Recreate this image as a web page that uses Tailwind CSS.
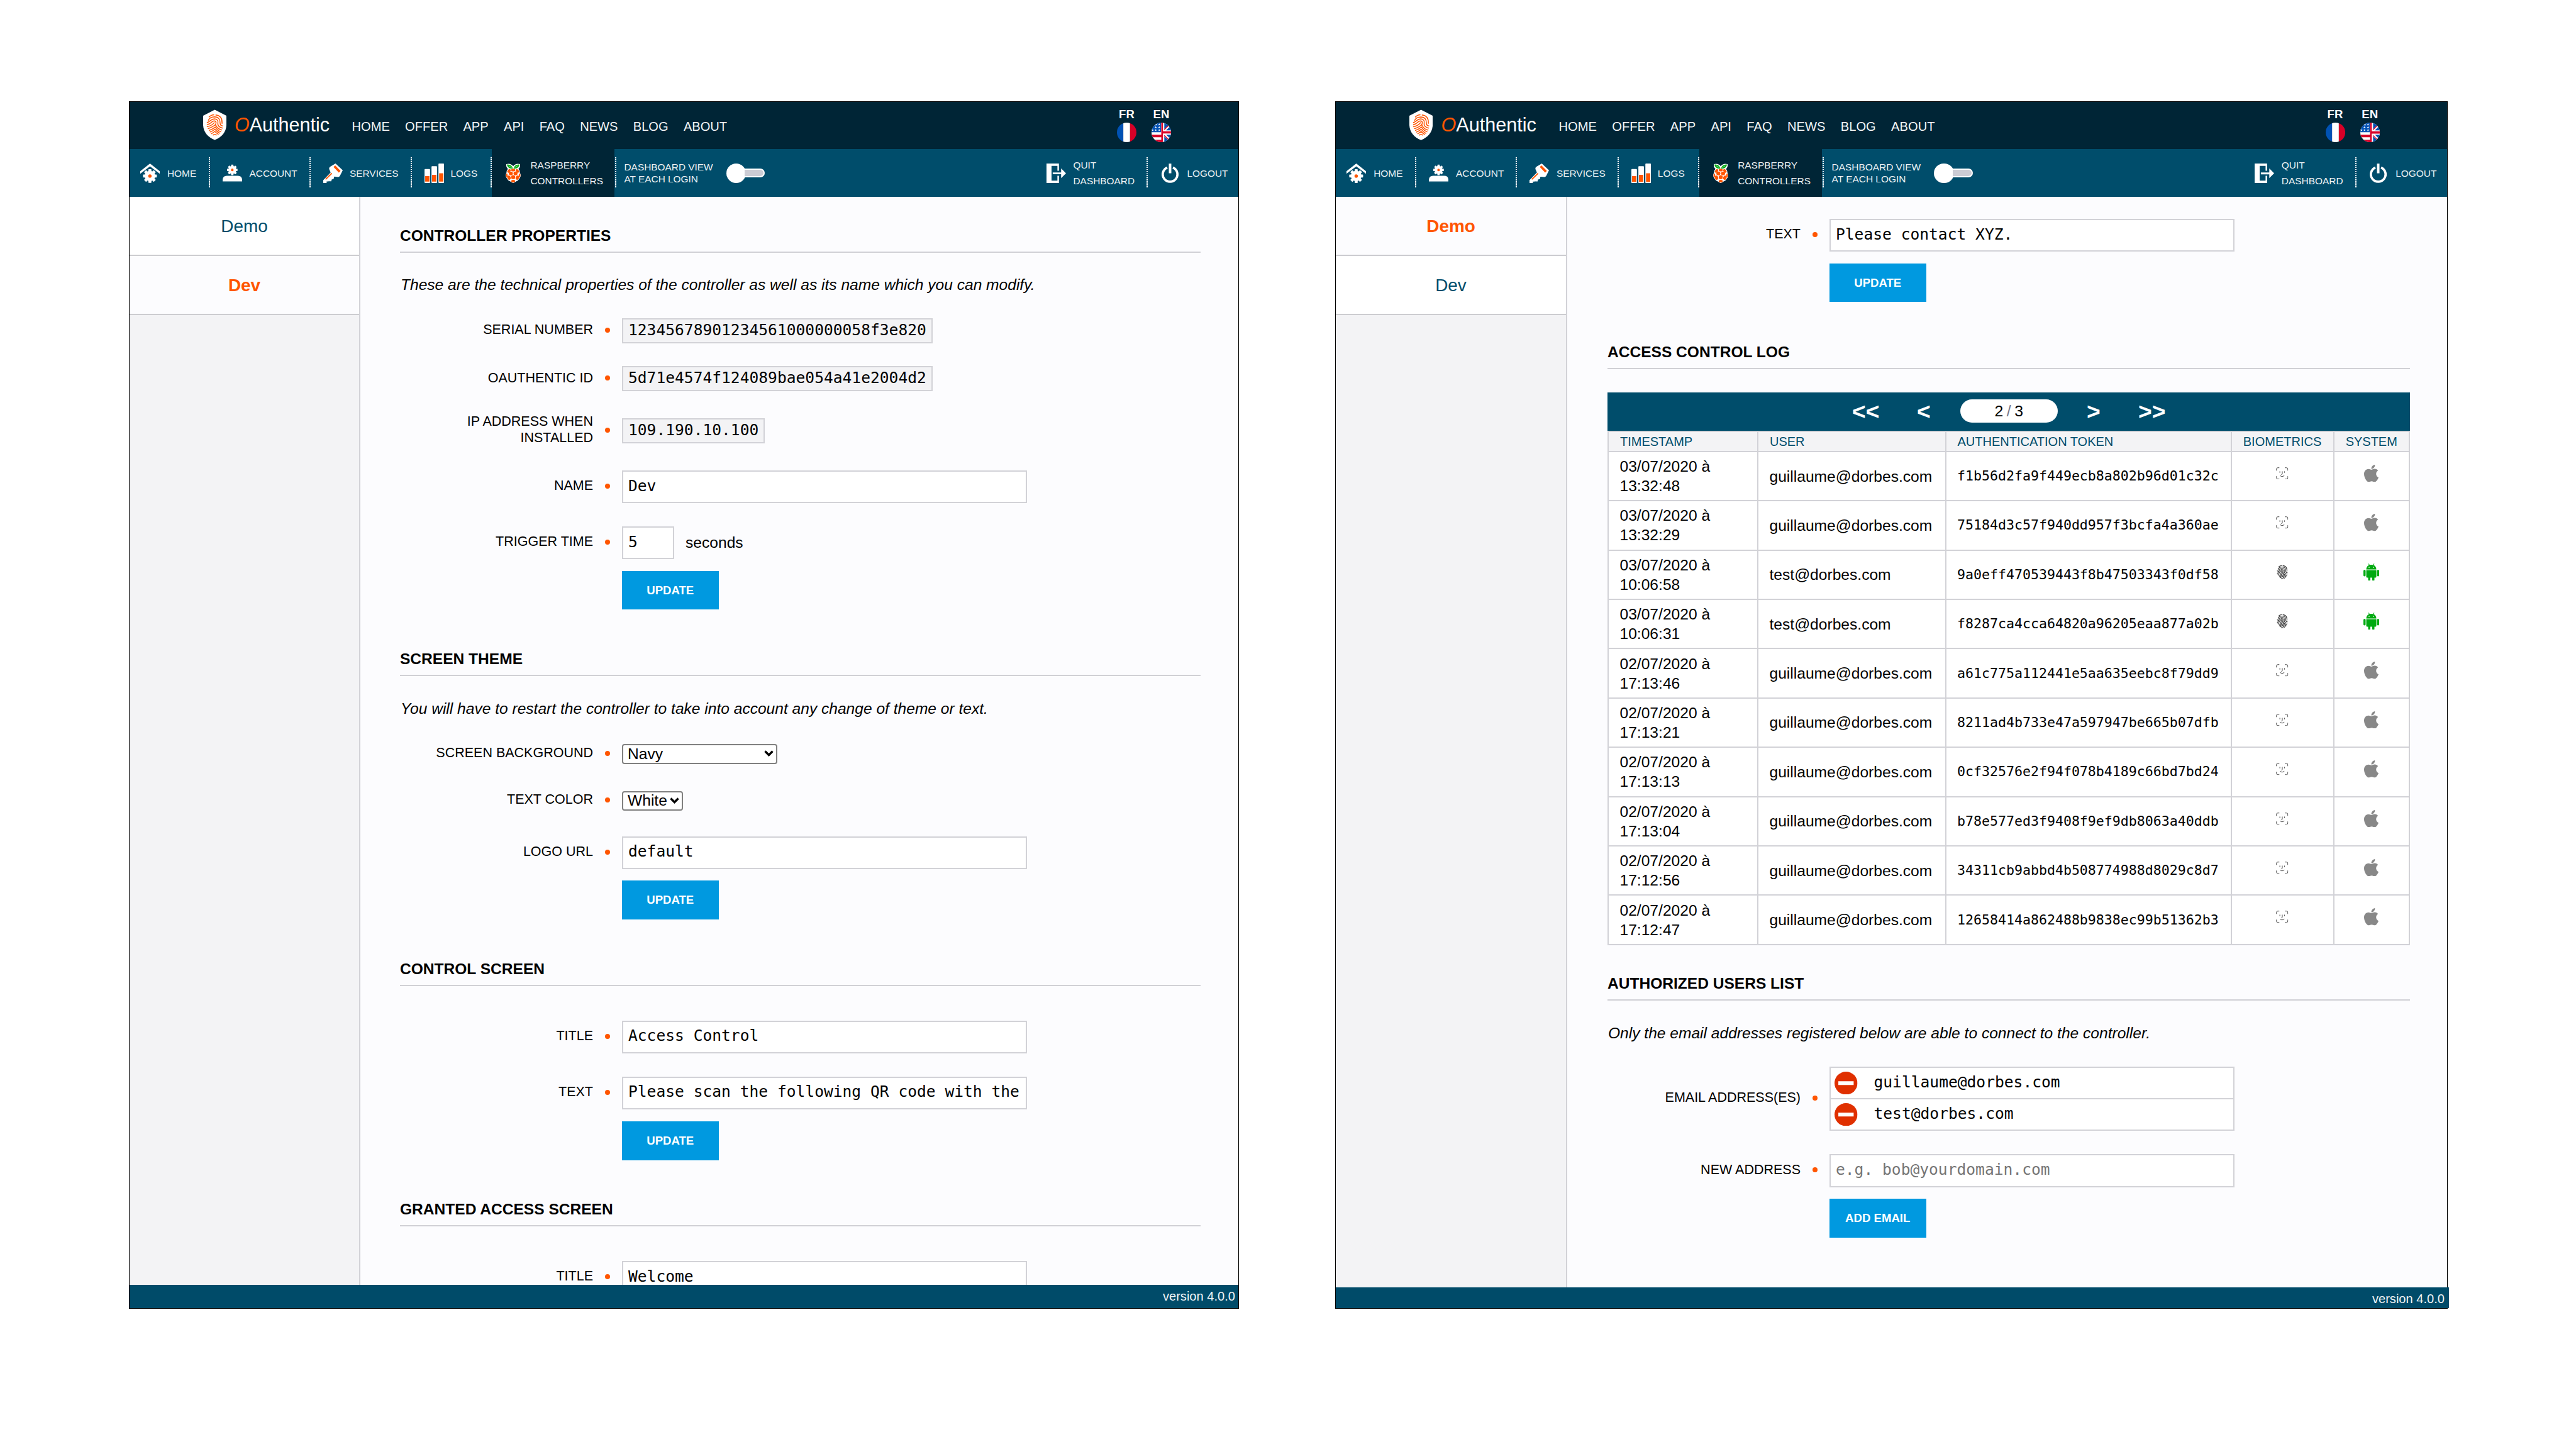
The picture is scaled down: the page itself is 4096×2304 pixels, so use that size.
<!DOCTYPE html>
<html lang="en">
<head>
<meta charset="utf-8">
<title>OAuthentic – Raspberry controllers</title>
<script src="https://cdn.jsdelivr.net/npm/@tailwindcss/browser@4"></script>
</head>
<body class="bg-white w-[4096px] h-[2304px] overflow-hidden font-['Liberation_Sans',Arial,sans-serif] text-black">

<svg width="0" height="0" class="absolute">
  <defs>
    <g id="prints" fill="none" stroke-linecap="butt">
      <path d="M34 45Q46 31 66 30"/>
      <path d="M74 31C104 34 114 55 113 78V84"/>
      <path d="M30 65C38 50 50 43 68 43C92 44 102 58 101 78C101 90 106 96 118 97"/>
      <path d="M22 77C44 72 44 55 68 55C86 56 91 68 88 81C85 96 100 108 117 110"/>
      <path d="M22 90C52 84 48 67 66 67C82 68 78 84 71 92"/>
      <path d="M22 102C46 98 58 88 68 76"/>
      <path d="M28 113C48 109 62 98 74 90C80 104 92 118 113 122"/>
      <path d="M34 124C50 120 62 112 72 104C80 116 92 128 107 133"/>
      <path d="M40 134C52 130 62 124 70 117C78 127 88 135 100 142"/>
      <path d="M48 144C56 140 62 136 70 130C76 136 82 142 92 148"/>
      <path d="M58 153C63 147 76 147 81 153"/>
    </g>
    <g id="gear">
      <circle r="31"/>
      <g id="tooth"><rect x="-9" y="-41" width="18" height="82" rx="3"/></g>
      <use href="#tooth" transform="rotate(45)"/>
      <use href="#tooth" transform="rotate(90)"/>
      <use href="#tooth" transform="rotate(135)"/>
      <circle r="10" fill="#f50"/>
    </g>
  </defs>
  <symbol id="shield" viewBox="0 0 139 181">
    <path fill="#fff" d="M69.500 0L139 36V92C137 133 112 164 69.500 181C27 164 2 133 0 92V36Z"/>
    <use href="#prints" stroke="#f50" stroke-width="5.600"/>
  </symbol>
  <symbol id="finger" viewBox="18 24 104 134"><use href="#prints" stroke="#333" stroke-width="6.400"/></symbol>
  <symbol id="i-home" viewBox="0 0 116 116">
    <path fill="#fff" d="M58 0L116 46V61L58 17L0 61V46Z"/>
    <use href="#gear" fill="#fff" transform="translate(57.500 74.500)"/>
  </symbol>
  <symbol id="i-account" viewBox="0 0 116 116">
    <use href="#gear" fill="#fff" transform="translate(57.500 38) scale(.76)"/>
    <path fill="#fff" d="M0 106V96Q2 73 25 73H91Q114 73 116 96V106Z"/>
    <path fill="#8fb0bf" d="M0 106H116V109H0Z"/>
  </symbol>
  <symbol id="i-key" viewBox="0 0 116 116">
    <path fill="#fff" d="M73 0L116 40L99 74Q95 80 88 80L67 78L64 80L62 92L50 95L48 106H35L32 104V107H20V116H0V99L44 53L35 33Q34 25 40 20Z"/>
    <path stroke="#f50" stroke-width="14" d="M66 16L98 49"/>
    <path stroke="#f50" stroke-width="7" stroke-linecap="round" d="M16 92L49 60"/>
  </symbol>
  <symbol id="i-logs" viewBox="0 0 116 116">
    <g fill="#fff"><rect y="33" width="33" height="83" rx="4"/><rect x="41.500" y="16" width="33" height="100" rx="4"/><rect x="83" width="33" height="116" rx="4"/></g>
    <path fill="#f50" d="M4 75H29V108H4ZM45 67H70V108H45ZM87 58H112V108H87Z"/>
  </symbol>
  <symbol id="i-rasp" viewBox="0 0 90 116">
    <path fill="#fff" d="M4 4Q30 -3 45 16Q60 -3 86 4Q88 24 76 32Q86 42 85 55Q96 72 83 88Q76 102 64 106Q54 114 45 116Q36 114 26 106Q14 102 7 88Q-6 72 5 55Q4 42 14 32Q2 24 4 4Z"/>
    <path fill="#0a1" d="M7 6Q34 3 43 29Q16 34 7 6ZM83 6Q56 3 47 29Q74 34 83 6Z"/>
    <path stroke="#fff" stroke-width="2" fill="none" d="M18 13L36 24M72 13L54 24"/>
    <g fill="#f50">
      <ellipse cx="45" cy="39" rx="12" ry="8"/>
      <ellipse cx="20" cy="44" rx="8" ry="12" transform="rotate(40 20 44)"/>
      <ellipse cx="70" cy="44" rx="8" ry="12" transform="rotate(-40 70 44)"/>
      <ellipse cx="31" cy="59" rx="12" ry="11"/><ellipse cx="59" cy="59" rx="12" ry="11"/>
      <ellipse cx="7" cy="70" rx="5" ry="11"/><ellipse cx="83" cy="70" rx="5" ry="11"/>
      <circle cx="45" cy="81" r="12"/>
      <ellipse cx="20" cy="84" rx="10" ry="13" transform="rotate(-20 20 84)"/>
      <ellipse cx="70" cy="84" rx="10" ry="13" transform="rotate(20 70 84)"/>
      <ellipse cx="45" cy="105" rx="12" ry="7.500"/>
    </g>
  </symbol>
  <symbol id="i-quit" viewBox="0 0 116 116">
    <path fill="#fff" d="M0 0H74V43H65V14H30V102H65V73H74V116H0Z"/>
    <path fill="#fff" d="M37 53H87V29L116 58L87 87V64H37Z"/>
  </symbol>
  <symbol id="i-power" viewBox="0 0 102 116">
    <path fill="none" stroke="#fff" stroke-width="14" d="M34 24A44 44 0 1 0 68 24"/>
    <path fill="#fff" d="M43.500 0H58.500V58H43.500Z"/>
  </symbol>
  <symbol id="i-fr" viewBox="0 0 116 116">
    <clipPath id="disc"><circle cx="58" cy="58" r="58"/></clipPath>
    <g clip-path="url(#disc)"><path fill="#0052b4" d="M0 0H39V116H0Z"/><path fill="#fff" d="M38 0H78V116H38Z"/><path fill="#d80027" d="M78 0H116V116H78Z"/></g>
  </symbol>
  <symbol id="i-en" viewBox="0 0 116 116">
    <g clip-path="url(#disc)">
      <path fill="#fff" d="M0 0H116V116H0Z"/>
      <path fill="#0052b4" d="M0 0H57V57H0ZM76 0H116L76 38ZM116 16V46H87ZM76 116V80L112 116ZM116 100V72H87Z"/>
      <path fill="#d80027" d="M0 72H58V87H0ZM0 102H58V116H0ZM58 0H68V116H58ZM58 51H116V65H58Z"/>
      <path stroke="#d80027" stroke-width="5" d="M76 42L108 10M76 76L108 108"/>
      <path fill="#fff" d="M46 4l2 5h5l-4 3 2 5-5-3-5 3 2-5-4-3h5zM46 21l2 5h5l-4 3 2 5-5-3-5 3 2-5-4-3h5zM46 38l2 5h5l-4 3 2 5-5-3-5 3 2-5-4-3h5zM25 21l2 5h5l-4 3 2 5-5-3-5 3 2-5-4-3h5zM25 38l2 5h5l-4 3 2 5-5-3-5 3 2-5-4-3h5zM28 6l2 4h5l-4 3 2 4-5-2-5 2 2-4-4-3h5zM7 38l2 5h5l-4 3 2 5-5-3-5 3 2-5-4-3h5z"/>
    </g>
  </symbol>
  <symbol id="i-face" viewBox="0 0 40 40">
    <g fill="none" stroke="#444" stroke-width="2" stroke-linecap="round">
      <path d="M1.500 10V6Q1.500 1.500 6 1.500H10M30 1.500H34Q38.500 1.500 38.500 6V10M38.500 30V34Q38.500 38.500 34 38.500H30M10 38.500H6Q1.500 38.500 1.500 34V30"/>
      <path d="M12.500 14V17M27.500 14V17M20.500 14V21Q20.500 23.500 18 23.500M13.500 28Q20 33.500 26.500 28"/>
    </g>
  </symbol>
  <symbol id="i-apple" viewBox="4 32 376 448">
    <path fill="#888" d="M318.700 268.700c-.2-36.700 16.400-64.400 50-84.800-18.800-26.900-47.200-41.700-84.700-44.600-35.500-2.800-74.300 20.700-88.500 20.700-15 0-49.400-19.700-76.400-19.700C63.300 141.200 4 184.800 4 273.500q0 39.300 14.400 81.200c12.800 36.700 59 126.700 107.200 125.200 25.200-.6 43-17.900 75.800-17.900 31.800 0 48.300 17.900 76.400 17.900 48.600-.7 90.400-82.500 102.600-119.300-65.200-30.700-61.700-90-61.700-91.900zm-56.600-164.200c27.300-32.400 24.800-61.900 24-72.500-24.100 1.400-52 16.400-67.900 34.900-17.500 19.800-27.800 44.300-25.600 71.900 26.100 2 49.900-11.400 69.500-34.300z"/>
  </symbol>
  <symbol id="i-android" viewBox="0 0 50 55">
    <g fill="#0a1">
      <path d="M9 19C9 12 13 7 18 5L15 1L16.500 0L20 4.500Q25 3 30 4.500L33.500 0L35 1L32 5C37 7 41 12 41 19Z"/>
      <path d="M9 21H41V42Q41 45 38 45H35V52Q35 55 32 55Q28 55 28 52V45H22V52Q22 55 18 55Q15 55 15 52V45H12Q9 45 9 42Z"/>
      <rect y="20" width="7" height="21" rx="3.500"/><rect x="43" y="20" width="7" height="21" rx="3.500"/>
    </g>
    <circle cx="18" cy="12" r="1.700" fill="#fff"/><circle cx="32" cy="12" r="1.700" fill="#fff"/>
  </symbol>
  <symbol id="i-remove" viewBox="0 0 36 36"><circle cx="18" cy="18" r="18" fill="#e03000"/><path fill="#fff" d="M6 15H30V21H6Z"/></symbol>
  <symbol id="i-caret" viewBox="0 0 15 10"><path d="M1.500 1.500L7.500 7.500L13.500 1.500" fill="none" stroke="#000" stroke-width="3.400"/></symbol>
</svg>

<div class="flex gap-[153px] pl-[205px] pt-[161px]">

  <!-- Controller "Dev" -->
  <section class="w-[1765px] h-[1920px] shrink-0 border border-black flex flex-col">
    <header data-header></header>
    <div class="flex h-[1730px] overflow-hidden bg-[#fcfcfe]">
      <aside class="w-[367px] shrink-0 border-r-2 border-[#d2d2d7] bg-[#f3f3f5] text-[27.9px] text-center">
        <div class="h-[94px] bg-white border-b-2 border-[#ccccd0] text-[#004d6b] leading-[93px]">Demo</div>
        <div class="h-[94px] bg-[#fcfcfe] border-b-2 border-[#ccccd0] text-[#f50] font-bold leading-[93px]">Dev</div>
      </aside>
      <main data-form="dev" class="flex-1 pl-[63px] pr-[60px] pt-[46.500px]"></main>
    </div>
    <footer class="flex-1 bg-[#004b69] text-[#f0f4f6] text-[20.1px] flex items-center justify-end pr-[5px]">version 4.0.0</footer>
  </section>

  <!-- Controller "Demo" -->
  <section class="w-[1769px] h-[1920px] shrink-0 border border-black flex flex-col">
    <header data-header class="[zoom:1.0027]"></header>
    <div class="flex h-[1734px] overflow-hidden bg-[#fcfcfe]">
      <aside class="w-[368px] shrink-0 border-r-2 border-[#d2d2d7] bg-[#f3f3f5] text-[27.9px] text-center">
        <div class="h-[94px] bg-[#fcfcfe] border-b-2 border-[#ccccd0] text-[#f50] font-bold leading-[93px]">Demo</div>
        <div class="h-[94px] bg-white border-b-2 border-[#ccccd0] text-[#004d6b] leading-[93px]">Dev</div>
      </aside>
      <main data-form="demo" class="flex-1 pl-[64px] pr-[59px] pt-[35px]"></main>
    </div>
    <footer class="flex-1 w-[calc(100%+3px)] bg-[#004b69] text-[#f0f4f6] text-[20.1px] flex items-center justify-end pt-[2px] pr-[7px]">version 4.0.0</footer>
  </section>
</div>

<script>
const icon = (id, cls) => `<svg class="shrink-0 ${cls}"><use href="#${id}"/></svg>`;
const divider = `<span class="w-[2px] h-[50px] shrink-0 bg-[repeating-linear-gradient(to_bottom,#fff_0_1.7px,transparent_1.7px_3.1px)]"></span>`;

const header = `
<div class="h-[75px] bg-[#002536] flex items-center">
  ${icon('shield', 'w-[37px] h-[49px] ml-[117px] mt-[-2px]')}
  <span class="ml-[13px] w-[172px] text-[30.5px] text-white mt-[-1px]"><i class="text-[#f50]">O</i>Authentic</span>
  <nav class="ml-[14.500px] flex gap-[24.300px] text-[20.1px] text-[#f2f5f6] pt-[3px]">
    ${['HOME','OFFER','APP','API','FAQ','NEWS','BLOG','ABOUT'].map(t => `<a>${t}</a>`).join('')}
  </nav>
  <div class="ml-auto mr-[107px] flex gap-[24px] text-white text-[18.6px] font-bold leading-[20px] mb-[1px]">
    <div class="w-[31px] flex flex-col items-center gap-[3px]"><span>FR</span>${icon('i-fr', 'size-[31px]')}</div>
    <div class="w-[31px] flex flex-col items-center gap-[3px]"><span>EN</span>${icon('i-en', 'size-[31px]')}</div>
  </div>
</div>
<div class="h-[76px] bg-[#004d6b] flex items-center text-[15.4px] text-[#eef3f5] whitespace-nowrap">
  <div class="w-[126px] pl-[17px] flex items-center gap-[12px]">${icon('i-home', 'size-[31px]')}<span class="pt-[1px]">HOME</span></div>${divider}
  <div class="w-[157.500px] pl-[19.500px] flex items-center gap-[12px]">${icon('i-account', 'size-[31px]')}<span class="pt-[1px]">ACCOUNT</span></div>${divider}
  <div class="w-[159.500px] pl-[20px] flex items-center gap-[11.500px]">${icon('i-key', 'size-[31px]')}<span class="pt-[1px]">SERVICES</span></div>${divider}
  <div class="w-[125px] pl-[19.500px] flex items-center gap-[11px]">${icon('i-logs', 'size-[31px]')}<span class="pt-[1px]">LOGS</span></div>${divider}
  <div class="w-[195px] h-full bg-[#002536] pl-[22px] flex items-center gap-[15.500px]">${icon('i-rasp', 'w-[24px] h-[31px]')}<span class="leading-[24.800px] pt-[1px]">RASPBERRY<br>CONTROLLERS</span></div><span class="w-[1px]"></span>${divider}
  <span class="w-[162px] pl-[12.500px] leading-[18.600px] pt-[1px]">DASHBOARD VIEW<br>AT EACH LOGIN</span>
  <span class="ml-[13px] flex items-center"><span class="size-[31px] rounded-full bg-white"></span><span class="w-[34px] h-[14px] -ml-[4px] rounded-r-full bg-[#ccccd4] border-2 border-white"></span></span>
  <div class="ml-auto flex items-center gap-[12px] w-[159.500px]">${icon('i-quit', 'size-[31px]')}<span class="leading-[24.800px] pt-[1px]">QUIT<br>DASHBOARD</span></div>${divider}
  <div class="w-[144px] pl-[21.500px] flex items-center gap-[14px]">${icon('i-power', 'w-[27px] h-[31px]')}<span class="pt-[1px]">LOGOUT</span></div>
</div>`;
document.querySelectorAll('[data-header]').forEach(h => h.innerHTML = header);

const heading = (t, mt) => `<h2 class="h-[42px] border-b-2 border-[#d0d0d5] text-[24.55px] leading-[30px] font-bold ${mt}">${t}</h2>`;
const note = (t, mt) => `<p class="italic text-[24.57px] leading-[30px] whitespace-nowrap pl-[1px] ${mt}">${t}</p>`;
const row = (label, cls, field) => `<div class="flex items-center ${cls}"><label class="w-[307px] shrink-0 text-right text-[21.5px] leading-[25.800px] pb-[2px]">${label}</label><span class="w-[46px] shrink-0 flex justify-center pb-[2px]"><i class="size-[8px] rounded-full bg-[#f50]"></i></span>${field}</div>`;
const mono = "font-['DejaVu_Sans_Mono',monospace] text-[24.6px] whitespace-pre flex items-center h-full px-[8px] pb-[2px] border-2 border-[#d2d2d7]";
const fixed = t => `<span class="${mono} bg-[#f3f3f5]">${t}</span>`;
const input = (t, w = 'w-[643.500px]', c = 'text-black') => `<span class="${mono} bg-white ${w} ${c}">${t}</span>`;
const select = (t, w) => `<span class="h-full ${w} bg-white border-2 border-[#808080] rounded-[4px] pl-[7px] pr-[4px] flex items-center justify-between text-[24.6px] leading-[28px]">${t}${icon('i-caret', 'w-[15px] h-[10px] mb-[1px]')}</span>`;
const button = (t, cls) => `<button class="block ml-[353px] w-[153.500px] bg-[#0099e0] text-white text-[18.6px] font-bold ${cls}">${t}</button>`;

document.querySelector('[data-form=dev]').innerHTML =
  heading('CONTROLLER PROPERTIES', '') +
  note('These are the technical properties of the controller as well as its name which you can modify.', 'mt-[36.400px]') +
  row('SERIAL NUMBER', 'mt-[38.100px] h-[40px]', fixed('12345678901234561000000058f3e820')) +
  row('OAUTHENTIC ID', 'mt-[36.500px] h-[40px]', fixed('5d71e4574f124089bae054a41e2004d2')) +
  row('IP ADDRESS WHEN<br>INSTALLED', 'mt-[43px] h-[39.500px]', fixed('109.190.10.100')) +
  row('NAME', 'mt-[43.500px] h-[51.700px]', input('Dev')) +
  row('TRIGGER TIME', 'mt-[37.300px] h-[51.700px]', input('5', 'w-[82.500px]') + '<span class="ml-[18.500px] text-[24.6px]">seconds</span>') +
  button('UPDATE', 'mt-[18.500px] h-[61.700px]') +
  heading('SCREEN THEME', 'mt-[63.700px]') +
  note('You will have to restart the controller to take into account any change of theme or text.', 'mt-[36.600px]') +
  row('SCREEN BACKGROUND', 'mt-[41.200px] h-[31.700px]', select('Navy', 'w-[246.500px]')) +
  row('TEXT COLOR', 'mt-[43px] h-[31.700px]', select('White', 'w-[96.500px]')) +
  row('LOGO URL', 'mt-[40.800px] h-[51.900px]', input('default')) +
  button('UPDATE', 'mt-[18.300px] h-[61.700px]') +
  heading('CONTROL SCREEN', 'mt-[64.200px]') +
  row('TITLE', 'mt-[54.900px] h-[52px]', input('Access Control')) +
  row('TEXT', 'mt-[37px] h-[52px]', input('Please scan the following QR code with the')) +
  button('UPDATE', 'mt-[18.600px] h-[62px]') +
  heading('GRANTED ACCESS SCREEN', 'mt-[63.600px]') +
  row('TITLE', 'mt-[55.200px] h-[52px]', input('Welcome'));

const G = 'guillaume@dorbes.com', T = 'test@dorbes.com';
const log = [
  ['03/07/2020 à', '13:32:48', G, 'f1b56d2fa9f449ecb8a802b96d01c32c'],
  ['03/07/2020 à', '13:32:29', G, '75184d3c57f940dd957f3bcfa4a360ae'],
  ['03/07/2020 à', '10:06:58', T, '9a0eff470539443f8b47503343f0df58'],
  ['03/07/2020 à', '10:06:31', T, 'f8287ca4cca64820a96205eaa877a02b'],
  ['02/07/2020 à', '17:13:46', G, 'a61c775a112441e5aa635eebc8f79dd9'],
  ['02/07/2020 à', '17:13:21', G, '8211ad4b733e47a597947be665b07dfb'],
  ['02/07/2020 à', '17:13:13', G, '0cf32576e2f94f078b4189c66bd7bd24'],
  ['02/07/2020 à', '17:13:04', G, 'b78e577ed3f9408f9ef9db8063a40ddb'],
  ['02/07/2020 à', '17:12:56', G, '34311cb9abbd4b508774988d8029c8d7'],
  ['02/07/2020 à', '17:12:47', G, '12658414a862488b9838ec99b51362b3'],
];
const cols = 'grid grid-cols-[238px_298.500px_454px_163px_1fr] border-l-2 border-b-2 border-[#d2d2d7]';
const cell = 'border-r-2 border-[#d2d2d7] flex items-center';
const table = `
<div class="mt-[36.800px]">
  <div class="h-[61.200px] bg-[#004d6b] text-white text-[37.2px] font-bold flex items-center leading-[40px] pb-[1px]">
    <span class="ml-[389px] w-[103px]">&lt;&lt;</span><span class="w-[69px]">&lt;</span>
    <span class="w-[154.500px] h-[37px] rounded-full bg-white text-black text-[24.8px] font-normal flex items-center justify-center gap-[5.500px]"><span>2</span><span class="text-[#778]">/</span><span>3</span></span>
    <span class="ml-[46.500px] w-[82px]">&gt;</span><span>&gt;&gt;</span>
  </div>
  <div class="${cols} border-t-2 h-[34px] bg-[#f3f3f5] text-[#004d6b] text-[20px] leading-[24px] whitespace-nowrap">
    <div class="${cell} pl-[18px]">TIMESTAMP</div><div class="${cell} pl-[18px]">USER</div><div class="${cell} pl-[18px]">AUTHENTICATION TOKEN</div><div class="${cell} justify-center">BIOMETRICS</div><div class="${cell} justify-center">SYSTEM</div>
  </div>
  ${log.map(([d, t, u, k]) => `<div class="${cols} h-[78.400px] bg-white text-[24.6px] leading-[31px] whitespace-nowrap">
    <div class="${cell} pl-[17.500px]"><span>${d}<br>${t}</span></div>
    <div class="${cell} pl-[17.500px]">${u}</div>
    <div class="${cell} pl-[17.500px] font-['DejaVu_Sans_Mono',monospace] text-[21.58px] pb-[1px]">${k}</div>
    <div class="${cell} justify-center pb-[9px]">${u === T ? icon('finger', 'w-[18px] h-[23.500px]') : icon('i-face', 'size-[19.500px]')}</div>
    <div class="${cell} justify-center pb-[9px]">${u === T ? icon('i-android', 'w-[25px] h-[27.500px]') : icon('i-apple', 'w-[23px] h-[27.500px]')}</div>
  </div>`).join('')}
</div>`;
const mail = (m, cls) => `<div class="flex-1 flex items-center pl-[6px] ${cls}">${icon('i-remove', 'size-[36.500px]')}<span class="ml-[26px] pb-[1px]">${m}</span></div>`;

document.querySelector('[data-form=demo]').innerHTML =
  row('TEXT', 'h-[51.700px]', input('Please contact XYZ.')) +
  button('UPDATE', 'mt-[18.700px] h-[61.500px]') +
  heading('ACCESS CONTROL LOG', 'mt-[64.600px]') +
  table +
  heading('AUTHORIZED USERS LIST', 'mt-[45.900px]') +
  note('Only the email addresses registered below are able to connect to the controller.', 'mt-[36.900px]') +
  row('EMAIL ADDRESS(ES)', 'mt-[38.300px] h-[102.400px]', `<div class="w-[643.500px] h-full bg-white border-2 border-[#d2d2d7] flex flex-col font-['DejaVu_Sans_Mono',monospace] text-[24.6px]">${mail(G, 'border-b-2 border-[#d2d2d7]')}${mail(T, '')}</div>`) +
  row('NEW ADDRESS', 'mt-[37px] h-[52.500px]', input('e.g. bob@yourdomain.com', 'w-[643.500px]', 'text-[#757575]')) +
  button('ADD EMAIL', 'mt-[18.500px] h-[62px]');
</script>
</body>
</html>
